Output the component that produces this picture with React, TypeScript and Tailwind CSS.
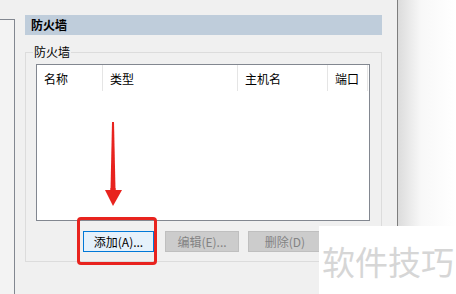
import React from "react";

const font = { fontFamily: '"Noto Sans CJK SC", "Noto Sans", sans-serif' };

const columns = [
  { label: "名称", width: "w-[66px]" },
  { label: "类型", width: "w-[135px]" },
  { label: "主机名", width: "w-[90px]" },
  { label: "端口", width: "w-[40px]" },
];

export default function App() {
  return (
    <div
      className="relative w-[456px] h-[294px] overflow-hidden bg-[#f0f0f0] flex text-[12px] text-black"
      style={font}
    >
      {/* left pane edge */}
      <div className="w-[15px] mt-[19px] border-t border-r border-[#828790] bg-[#f3f3f3]" />

      {/* main dialog area */}
      <div className="w-[382px] pl-[10px] pt-[15px] pr-[15px] flex flex-col">
        <div className="h-[20px] bg-[#bfcddb] flex items-center pl-[6px] font-bold leading-none">
          防火墙
        </div>

        {/* group box */}
        <div className="relative mt-[17px] h-[210px] border border-[#dcdcdc] pl-[10px] pt-[11px] pr-[11px]">
          <span className="absolute left-[7px] -top-[8px] px-[1px] bg-[#f0f0f0] leading-[14px]">
            防火墙
          </span>

          <div className="h-[157px] border border-[#828790] bg-white">
            <div className="flex h-[27px] items-start">
              {columns.map((c) => (
                <div
                  key={c.label}
                  className={`${c.width} h-[26px] pl-[7px] pt-[7px] leading-[14px] border-r border-[#e5e5e5]`}
                >
                  {c.label}
                </div>
              ))}
            </div>
          </div>

          <div className="flex mt-[10px] h-[21px]">
            <button className="ml-[47px] w-[71px] h-[21px] bg-[#e5f1fb] border border-[#0078d7] leading-none">
              添加(A)...
            </button>
            <button className="ml-[11px] w-[74px] h-[21px] bg-[#cccccc] border border-[#bfbfbf] text-[#838383] leading-none">
              编辑(E)...
            </button>
            <button className="ml-[9px] w-[74px] h-[21px] bg-[#cccccc] border border-[#bfbfbf] text-[#838383] leading-none">
              删除(D)
            </button>
          </div>
        </div>
      </div>

      {/* window edge with shadow */}
      <div className="w-px bg-[#7e7e7e]" />
      <div className="flex-1 bg-gradient-to-r from-[#dcdcdc] via-[#f8f8f8] via-40% to-white" />

      {/* annotation: red arrow */}
      <svg
        className="absolute left-[104px] top-[120px]"
        width="20"
        height="88"
        viewBox="0 0 20 88"
      >
        <polygon points="8,2 10,2 11.5,70 9,70 6.5,70" fill="#e8231e" />
        <polygon points="6.5,68 11.5,68 11.5,70 18,70 9,86 1,70 6.5,70" fill="#e8231e" />
      </svg>

      {/* annotation: red highlight box */}
      <div className="absolute left-[77px] top-[217px] w-[80px] h-[48px] border-[3px] border-[#e8231e] rounded-[4px]" />

      {/* watermark */}
      <div className="absolute left-[319px] top-[226px] w-[137px] h-[68px] bg-white flex items-center pl-[3px] pt-[2px]">
        <span className="text-[33px] leading-none text-[#d6d6d6] whitespace-nowrap">
          软件技巧
        </span>
      </div>
    </div>
  );
}
